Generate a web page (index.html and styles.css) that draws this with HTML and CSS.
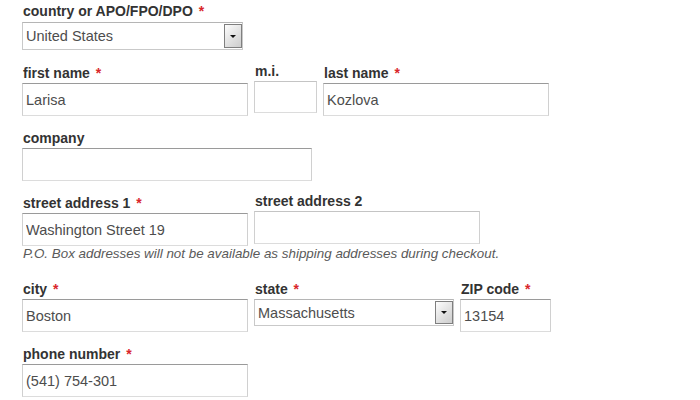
FILE: index.html
```html
<!DOCTYPE html>
<html lang="en">
<head>
    <meta charset="UTF-8">
    <meta name="viewport" content="width=device-width, initial-scale=1.0">
    <title>Shipping Address</title>
    <link rel="stylesheet" href="styles.css">
</head>
<body>
    <form class="address-form">
        <div class="row row-country">
            <div class="field">
                <label class="field-label">country or APO/FPO/DPO <span class="req">*</span></label>
                <div class="select-box w-country">
                    <select>
                        <option>United States</option>
                    </select>
                    <span class="select-btn"></span>
                </div>
            </div>
        </div>

        <div class="row row-name">
            <div class="field">
                <label class="field-label">first name <span class="req">*</span></label>
                <input class="text-input w-wide" type="text" value="Larisa">
            </div>
            <div class="field optional">
                <label class="field-label">m.i.</label>
                <input class="text-input w-mi" type="text" value="">
            </div>
            <div class="field">
                <label class="field-label">last name <span class="req">*</span></label>
                <input class="text-input w-wide" type="text" value="Kozlova">
            </div>
        </div>

        <div class="row">
            <div class="field">
                <label class="field-label">company</label>
                <input class="text-input w-company" type="text" value="">
            </div>
        </div>

        <div class="row row-street">
            <div class="field">
                <label class="field-label">street address 1 <span class="req">*</span></label>
                <input class="text-input w-wide" type="text" value="Washington Street 19">
            </div>
            <div class="field optional">
                <label class="field-label">street address 2</label>
                <input class="text-input w-wide" type="text" value="">
            </div>
        </div>
        <p class="note">P.O. Box addresses will not be available as shipping addresses during checkout.</p>

        <div class="row">
            <div class="field">
                <label class="field-label">city <span class="req">*</span></label>
                <input class="text-input w-wide" type="text" value="Boston">
            </div>
            <div class="field">
                <label class="field-label">state <span class="req">*</span></label>
                <div class="select-box w-state">
                    <select>
                        <option>Massachusetts</option>
                    </select>
                    <span class="select-btn"></span>
                </div>
            </div>
            <div class="field">
                <label class="field-label">ZIP code <span class="req">*</span></label>
                <input class="text-input w-zip" type="text" value="13154">
            </div>
        </div>

        <div class="row">
            <div class="field">
                <label class="field-label">phone number <span class="req">*</span></label>
                <input class="text-input w-wide" type="text" value="(541) 754-301">
            </div>
        </div>
    </form>
</body>
</html>
```

FILE: styles.css
```css
body {
    margin: 0;
    background-color: #fff;
    font-family: "Liberation Sans", Arial, sans-serif;
    color: #333;
}
.address-form {
    padding: 3px 0 0 22px;
}
.row {
    display: flex;
    gap: 6px;
    margin-bottom: 14px;
}
.row-country {
    margin-bottom: 15px;
}
.row-street {
    margin-bottom: 0;
}
.field {
    display: flex;
    flex-direction: column;
}
.field.optional {
    margin-top: -2px;
}
.field-label {
    display: block;
    height: 16px;
    line-height: 16px;
    margin: 0 0 2px 1px;
    font-size: 14px;
    font-weight: bold;
    color: #333;
    white-space: nowrap;
}
.req {
    color: #d9262b;
    font-size: 14px;
    margin-left: 2px;
}
.text-input {
    box-sizing: border-box;
    height: 33px;
    margin: 0;
    padding: 0 3px;
    font-family: inherit;
    font-size: 14.5px;
    color: #4d4d4d;
    background: #fff;
    border: 1px solid #d0d0d0;
    border-top-color: #9a9a9a;
    border-bottom-color: #dcdcdc;
    border-radius: 0;
    outline: none;
}
.optional .text-input {
    border-top-color: #c4c4c4;
}
.w-wide { width: 226px; }
.w-mi { width: 63px; height: 32px; }
.w-company { width: 290px; }
.w-zip { width: 91px; }
.w-country { width: 221px; height: 28px; margin-top: 1px; }
.w-state { width: 200px; height: 27px; }

.select-box {
    box-sizing: border-box;
    display: flex;
    align-items: center;
    border: 1px solid #c9c9c9;
    border-top-color: #b5b5b5;
    background: #fff;
}
.select-box select {
    flex: 1;
    min-width: 0;
    height: 100%;
    padding: 0 0 0 3px;
    border: none;
    background: transparent;
    font-family: inherit;
    font-size: 14.5px;
    color: #4d4d4d;
    appearance: none;
    -webkit-appearance: none;
    outline: none;
}
.select-btn {
    box-sizing: border-box;
    display: flex;
    align-items: center;
    justify-content: center;
    width: 18px;
    height: 24px;
    border: 1px solid #7f7f7f;
    background: linear-gradient(135deg, #fdfdfd, #e4e4e4 50%, #cdcdcd);
}
.w-state .select-btn {
    height: 23px;
}
.select-btn::before {
    content: "";
    border-left: 3px solid transparent;
    border-right: 3px solid transparent;
    border-top: 3px solid #111;
}
.note {
    margin: 0 0 19px 1px;
    line-height: 16px;
    font-size: 13.4px;
    font-style: italic;
    color: #5a5a5a;
}
```
